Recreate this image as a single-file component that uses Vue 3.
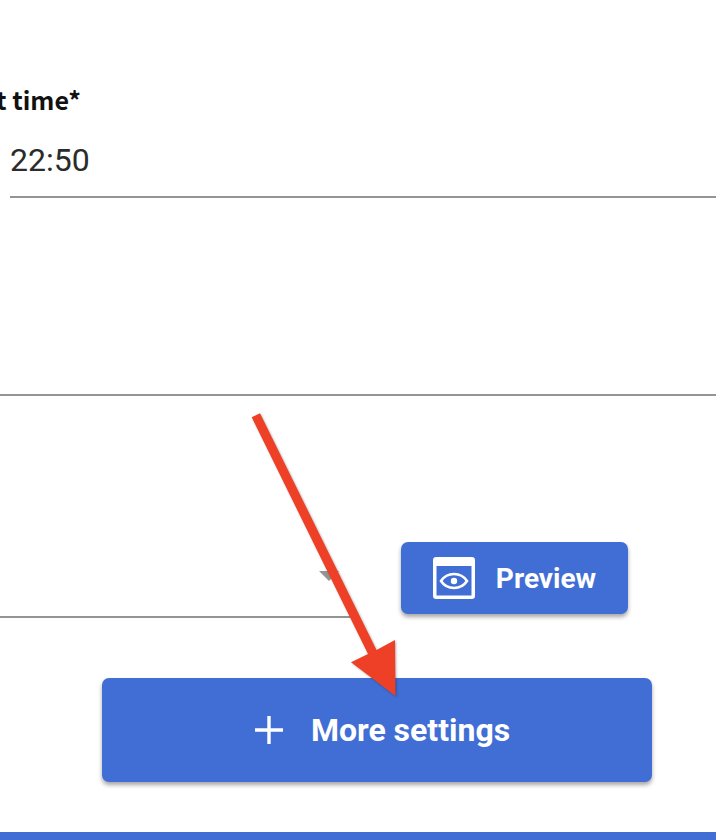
<template>
  <main class="page">
    <section class="time-field">
      <label class="field-label">Start time*</label>
      <div class="time-value">22:50</div>
    </section>

    <div class="empty-field"></div>

    <section class="select-row">
      <div class="select-field">
        <span class="caret"></span>
      </div>
      <button class="btn preview-btn" type="button">
        <svg class="preview-icon" viewBox="0 0 42 42" width="42" height="42" fill="none">
          <rect x="1.750" y="1.750" width="38.500" height="38.500" rx="1.500" stroke="#fff" stroke-width="3.500" />
          <path d="M1.500 5.500h39" stroke="#fff" stroke-width="7" />
          <path d="M8 24c3-4.600 7.500-7 13-7s10 2.400 13 7c-3 4.600-7.500 7-13 7s-10-2.400-13-7z" stroke="#fff" stroke-width="2.600" />
          <circle cx="21" cy="24" r="3.200" fill="#fff" />
        </svg>
        <span>Preview</span>
      </button>
    </section>

    <div class="more-row">
      <button class="btn more-btn" type="button">
        <svg viewBox="0 0 28 28" width="28" height="28">
          <path d="M14 0v28M0 14h28" stroke="#fff" stroke-width="3.400" />
        </svg>
        <span>More settings</span>
      </button>
    </div>

    <footer class="bottom-bar"></footer>

    <svg class="arrow" viewBox="0 0 716 840" width="716" height="840">
      <path d="M251.700 417.300 260 413.300 376.500 650 395 640 395.500 696 351 662.300 368 654z" fill="#ee4026" />
    </svg>
  </main>
</template>

<script setup>
</script>

<style>
html, body {
  margin: 0;
  background: #fff;
}
</style>

<style scoped>
.page {
  position: relative;
  width: 716px;
  height: 840px;
  overflow: hidden;
  background: #fff;
  display: flex;
  flex-direction: column;
  font-family: Roboto, sans-serif;
}

.time-field {
  padding: 82px 0 0 10px;
  height: 116px;
}
.field-label {
  display: block;
  margin-left: -64.500px;
  font-family: "Noto Sans CJK JP", "Noto Sans", sans-serif;
  font-size: 25px;
  font-weight: 700;
  line-height: 34px;
  color: #111;
  white-space: nowrap;
}
.time-value {
  margin-top: 24px;
  height: 56px;
  font-size: 32px;
  line-height: 40px;
  color: #2b2b2b;
  border-bottom: 2px solid #949494;
}

.empty-field {
  height: 196px;
  border-bottom: 2px solid #949494;
}

.select-row {
  display: flex;
  height: 222px;
  box-sizing: border-box;
  position: relative;
}
.select-field {
  width: 355px;
  height: 222px;
  box-sizing: border-box;
  border-bottom: 2px solid #949494;
  position: relative;
}
.caret {
  position: absolute;
  left: 319px;
  top: 175px;
  border-left: 10px solid transparent;
  border-right: 10px solid transparent;
  border-top: 10px solid #949494;
}

.btn {
  border: 0;
  color: #fff;
  background: #416ed5;
  font-family: Roboto, sans-serif;
  font-weight: 700;
  display: flex;
  align-items: center;
  justify-content: center;
  box-shadow: 0 3px 4px rgba(0, 0, 0, .35);
}

.preview-btn {
  margin: 146px 0 0 46px;
  width: 227px;
  height: 72px;
  border-radius: 7px;
  font-size: 28px;
  gap: 21px;
}
.preview-icon { flex: none; }

.more-row {
  padding: 60px 0 0 102px;
}
.more-btn {
  width: 550px;
  height: 104px;
  padding: 0 0 0 11px;
  border-radius: 7px;
  font-size: 32px;
  gap: 28px;
}

.bottom-bar {
  margin-top: 50px;
  height: 8px;
  background: #416ed5;
}

.arrow {
  position: absolute;
  left: 0;
  top: 0;
  pointer-events: none;
  filter: drop-shadow(1px 1px 1px rgba(0, 0, 0, .3));
}
</style>
